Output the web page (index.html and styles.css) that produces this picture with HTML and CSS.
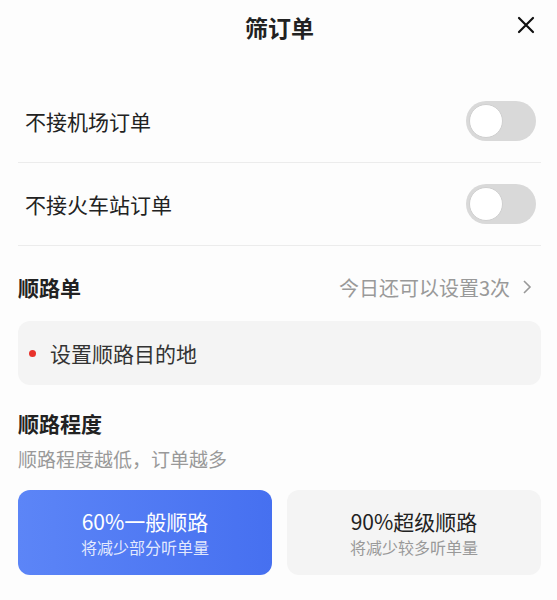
FILE: index.html
```html
<!DOCTYPE html>
<html lang="zh-CN">
<head>
  <meta charset="UTF-8" />
  <meta name="viewport" content="width=device-width, initial-scale=1.0"/>
  <title>筛订单</title>
  <link rel="stylesheet" href="styles.css">
</head>
<body>
  <div class="header">
    <span class="title">筛订单</span>
    <svg class="close" width="18" height="18" viewBox="0 0 18 18">
      <path d="M2 2 L16 16 M16 2 L2 16" stroke="#111" stroke-width="2.2" stroke-linecap="round" fill="none"/>
    </svg>
  </div>

  <div class="list">
    <div class="row">
      <span>不接机场订单</span>
      <span class="switch"><span class="knob"></span></span>
    </div>
    <div class="row">
      <span>不接火车站订单</span>
      <span class="switch"><span class="knob"></span></span>
    </div>
  </div>

  <div class="section-head">
    <span class="section-title">顺路单</span>
    <span class="hint">今日还可以设置3次
      <svg width="10" height="16" viewBox="0 0 10 16">
        <path d="M2 2 L8 8 L2 14" stroke="#999" stroke-width="1.6" fill="none"/>
      </svg>
    </span>
  </div>

  <div class="dest">
    <span class="dot"></span>
    <span>设置顺路目的地</span>
  </div>

  <div class="section-title level-title">顺路程度</div>
  <div class="sub">顺路程度越低，订单越多</div>

  <div class="options">
    <div class="option active">
      <div class="opt-name">60%一般顺路</div>
      <div class="opt-desc">将减少部分听单量</div>
    </div>
    <div class="option">
      <div class="opt-name">90%超级顺路</div>
      <div class="opt-desc">将减少较多听单量</div>
    </div>
  </div>
</body>
</html>
```

FILE: styles.css
```css
body { margin: 0; padding: 0 16px 0 18px; background: #fdfdfd; color: #222; font-family: "Noto Sans CJK SC", "Noto Sans", sans-serif; }

.header { height: 56px; display: flex; align-items: center; justify-content: center; position: relative; }
.title { font-size: 23px; font-weight: 600; margin-top: -3px; }
.close { position: absolute; right: 6px; top: 16px; }

.list { margin-top: 24px; }
.row { height: 82px; display: flex; align-items: center; justify-content: space-between; padding-left: 7px; border-bottom: 1px solid #ececec; font-size: 21px; }
.switch { width: 70px; height: 40px; border-radius: 20px; background: #d9d9d9; margin-right: 5px; display: flex; align-items: center; padding-left: 3px; box-sizing: border-box; }
.knob { width: 32px; height: 32px; border-radius: 50%; background: #fff; border: 1px solid #cfcfcf; }

.section-head { margin-top: 27px; display: flex; justify-content: space-between; align-items: center; height: 28px; }
.section-title { font-size: 21px; font-weight: 700; line-height: 28px; }
.hint { font-size: 20px; color: #999; display: flex; align-items: center; gap: 12px; margin-right: 9px; }

.dest { margin-top: 20px; height: 64px; background: #f4f4f4; border-radius: 12px; display: flex; align-items: center; font-size: 21px; color: #333; }
.dot { width: 7px; height: 7px; border-radius: 50%; background: #e8322b; margin: 0 14px 0 11px; }

.level-title { margin-top: 24px; }
.sub { margin-top: 9px; font-size: 19px; color: #999; line-height: 26px; }

.options { margin-top: 18px; display: flex; gap: 15px; }
.option { flex: 1; height: 85px; border-radius: 12px; background: #f4f4f4; display: flex; flex-direction: column; align-items: center; justify-content: center; }
.option.active { background: linear-gradient(90deg, #5c85f7, #4670f0); color: #fff; }
.opt-name { font-size: 21px; line-height: 28px; }
.opt-desc { font-size: 16px; line-height: 24px; color: #999; }
.option.active .opt-desc { color: rgba(255,255,255,0.85); }
```
